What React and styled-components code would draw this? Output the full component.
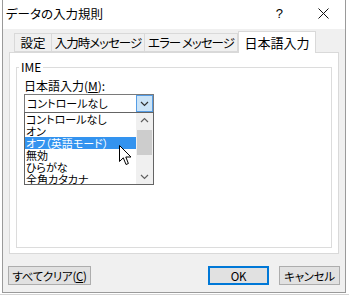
import styled, { createGlobalStyle } from "styled-components"

const GlobalStyle = createGlobalStyle`
  html, body {
    margin: 0;
    padding: 0;
    background: #ffffff;
  }
  body {
    font-family: "Noto Sans CJK JP", "Noto Sans", sans-serif;
    font-feature-settings: "palt";
    color: #000;
  }
`

const listItems = ["コントロールなし", "オン", "オフ（英語モード）", "無効", "ひらがな", "全角カタカナ"]

const tabs = [
  { label: "設定", width: 38 },
  { label: "入力時メッセージ", width: 93 },
  { label: "エラー メッセージ", width: 93 },
  { label: "日本語入力", width: 78, active: true },
]

const Chevron = ({ up, color = "#404040" }) => (
  <svg width="9" height="6" viewBox="0 0 9 6">
    <polyline
      points={up ? "1,5 4.5,1.5 8,5" : "1,1 4.5,4.5 8,1"}
      fill="none"
      stroke={color}
      strokeWidth="1.2"
    />
  </svg>
)

const App = () => {
  return (
    <Page>
      <GlobalStyle />
      <Dialog>
        <TitleBar>
          <Title>データの入力規則</Title>
          <TitleButtons>
            <Help>?</Help>
            <svg width="11" height="11" viewBox="0 0 11 11">
              <path d="M0.5 0.5 L10.5 10.5 M10.5 0.5 L0.5 10.5" stroke="#111" strokeWidth="1" />
            </svg>
          </TitleButtons>
        </TitleBar>

        <Body>
          <TabRow>
            {tabs.map((t) => (
              <Tab key={t.label} $width={t.width} $active={t.active}>
                {t.label}
              </Tab>
            ))}
          </TabRow>

          <Panel>
            <GroupBox>
              <Legend>IME</Legend>
              <FieldLabel>
                日本語入力(<u>M</u>):
              </FieldLabel>
              <ComboWrap>
                <Combo>
                  <ComboText>コントロールなし</ComboText>
                  <ComboButton>
                    <Chevron color="#333" />
                  </ComboButton>
                </Combo>
                <DropList>
                  <Items>
                    {listItems.map((item, i) => (
                      <Item key={item} $selected={i === 2}>
                        {item}
                      </Item>
                    ))}
                  </Items>
                  <ScrollBar>
                    <ScrollArrow>
                      <Chevron up color="#606060" />
                    </ScrollArrow>
                    <Track>
                      <Thumb />
                    </Track>
                    <ScrollArrow>
                      <Chevron color="#606060" />
                    </ScrollArrow>
                  </ScrollBar>
                </DropList>
                <Cursor width="13" height="21" viewBox="0 0 13 21">
                  <path
                    d="M0.5 0.5 L0.5 16.5 L4.3 12.8 L7 19.5 L9.4 18.5 L6.8 12 L12 12 Z"
                    fill="#fff"
                    stroke="#000"
                    strokeWidth="1"
                    strokeLinejoin="miter"
                  />
                </Cursor>
              </ComboWrap>
            </GroupBox>
          </Panel>

          <ButtonRow>
            <Button $width={83}>
              すべてクリア(<u>C</u>)
            </Button>
            <Spacer />
            <Button $width={61} $primary>
              OK
            </Button>
            <Button $width={61}>キャンセル</Button>
          </ButtonRow>
        </Body>
      </Dialog>
    </Page>
  )
}

const Page = styled.div`
  width: 349px;
  height: 296px;
  overflow: hidden;
  background:
    linear-gradient(#d4d4d4, #d4d4d4) 0 294px / 100% 1px no-repeat,
    #ffffff;
`

const Dialog = styled.div`
  margin-left: 2px;
  width: 344px;
  height: 293px;
  box-sizing: border-box;
  border: 1px solid #9a9a9a;
  border-top: none;
  background: #f0f0f0;
  display: flex;
  flex-direction: column;
`

const TitleBar = styled.div`
  height: 29px;
  background: #ffffff;
  display: flex;
  align-items: center;
  justify-content: space-between;
  padding: 0 16px 0 3px;
`

const Title = styled.div`
  font-size: 12.5px;
  margin-top: -2px;
`

const TitleButtons = styled.div`
  display: flex;
  align-items: center;
  gap: 35px;
  margin-top: -2px;
`

const Help = styled.span`
  font-family: "Liberation Sans", sans-serif;
  font-size: 13px;
`

const Body = styled.div`
  flex: 1;
  padding: 2px 5px 0 6px;
  display: flex;
  flex-direction: column;
`

const TabRow = styled.div`
  display: flex;
  align-items: flex-end;
  height: 21px;
  padding-left: 5px;
  position: relative;
  z-index: 1;
`

const Tab = styled.div`
  width: ${(p) => p.$width}px;
  height: ${(p) => (p.$active ? 22 : 19)}px;
  box-sizing: border-box;
  border: 1px solid #d9d9d9;
  border-bottom: ${(p) => (p.$active ? "none" : "1px solid #d9d9d9")};
  border-left: ${(p) => (p.$active ? "1px solid #d9d9d9" : "none")};
  background: ${(p) => (p.$active ? "#ffffff" : "#f0f0f0")};
  font-size: ${(p) => (p.$active ? 13 : 12.5)}px;
  letter-spacing: ${(p) => (p.$active ? 0 : -1)}px;
  white-space: nowrap;
  display: flex;
  align-items: center;
  justify-content: center;
  margin-bottom: ${(p) => (p.$active ? -1 : 0)}px;

  &:first-child {
    border-left: 1px solid #d9d9d9;
    letter-spacing: 0;
  }
`

const Panel = styled.div`
  height: 202px;
  width: 330px;
  box-sizing: border-box;
  border: 1px solid #d9d9d9;
  background: #ffffff;
  padding: 8px 6px 5px 6px;
  display: flex;
`

const GroupBox = styled.div`
  flex: 1;
  position: relative;
  border: 1px solid #dcdcdc;
  margin-top: 6px;
  padding: 10px 0 0 7px;
`

const Legend = styled.span`
  position: absolute;
  top: -9px;
  left: 2px;
  padding: 0 2px;
  background: #ffffff;
  font-size: 12px;
  line-height: 16px;
`

const FieldLabel = styled.div`
  font-size: 12px;
  line-height: 16px;
  height: 16px;

  u {
    text-decoration: underline;
  }
`

const ComboWrap = styled.div`
  position: relative;
  width: 130px;
`

const Combo = styled.div`
  height: 19px;
  box-sizing: border-box;
  border: 1px solid #7a7a7a;
  background: #ffffff;
  display: flex;
  align-items: center;
  padding-left: 2px;
`

const ComboText = styled.span`
  flex: 1;
  font-size: 11px;
  line-height: 15px;
`

const ComboButton = styled.div`
  width: 17px;
  height: 17px;
  box-sizing: border-box;
  border: 1px solid #569de5;
  background: #cce4f7;
  display: flex;
  align-items: center;
  justify-content: center;
`

const DropList = styled.div`
  position: absolute;
  top: 18px;
  left: 0;
  width: 130px;
  height: 73px;
  box-sizing: border-box;
  border: 1px solid #646464;
  background: #ffffff;
  display: flex;
  overflow: hidden;
`

const Items = styled.div`
  flex: 1;
  display: flex;
  flex-direction: column;
`

const Item = styled.div`
  height: 12px;
  flex: none;
  font-size: 11px;
  line-height: 12px;
  padding-left: 1px;
  white-space: nowrap;
  background: ${(p) => (p.$selected ? "#3393ef" : "transparent")};
  color: ${(p) => (p.$selected ? "#ffffff" : "#000000")};
`

const ScrollBar = styled.div`
  width: 17px;
  background: #f0f0f0;
  display: flex;
  flex-direction: column;
`

const ScrollArrow = styled.div`
  height: 14px;
  display: flex;
  align-items: center;
  justify-content: center;
`

const Track = styled.div`
  flex: 1;
  padding: 3px 1px 0 1px;
`

const Thumb = styled.div`
  height: 25px;
  background: #cdcdcd;
`

const Cursor = styled.svg`
  position: absolute;
  left: 95px;
  top: 51px;
`

const ButtonRow = styled.div`
  display: flex;
  align-items: center;
  gap: 10px;
  padding: 12px 0 0 0;
  margin-left: -1px;
`

const Spacer = styled.div`
  flex: 1;
`

const Button = styled.div`
  width: ${(p) => p.$width}px;
  height: 19px;
  box-sizing: border-box;
  border: ${(p) => (p.$primary ? "2px solid #0078d7" : "1px solid #adadad")};
  background: #e1e1e1;
  font-size: 11.5px;
  letter-spacing: -0.3px;
  display: flex;
  align-items: center;
  justify-content: center;

  u {
    text-decoration: underline;
  }
`

export default App
